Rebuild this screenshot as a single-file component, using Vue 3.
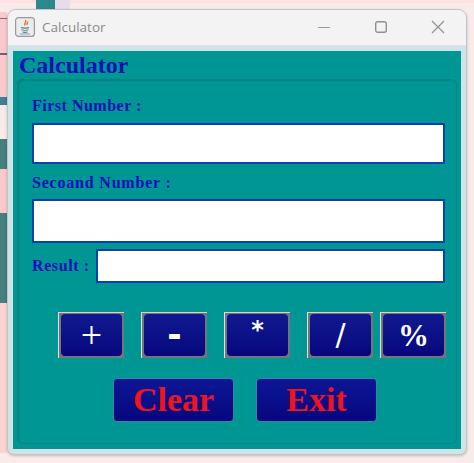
<script setup>
const ops = [
  { text: '+', cls: 'plus' },
  { text: '-', cls: 'minus' },
  { text: '*', cls: 'star' },
  { text: '/', cls: 'slash' },
  { text: '%', cls: 'percent' },
]
</script>

<template>
  <div class="desk">
    <!-- what shows of the page behind the window -->
    <div class="behind">
      <span class="bit top"></span>
      <span class="bit a"></span>
      <span class="bit a2"></span>
      <span class="bit b"></span>
      <span class="bit line1"></span>
      <span class="bit line2"></span>
      <span class="bit c"></span>
      <span class="bit d"></span>
      <span class="bit b2"></span>
      <span class="bit e"></span>
      <span class="bit b3"></span>
    </div>

    <div class="window">
      <div class="titlebar">
        <svg class="app-icon" width="20" height="20" viewBox="0 0 20 20">
          <rect x="0.6" y="0.6" width="18.8" height="18.8" rx="3" fill="#ececec" stroke="#9a9a9a" stroke-width="1.200" />
          <path d="M10.500 3c1.500 2-2 3-.5 5.500M12.500 4.500c.8 1.300-1.200 2-.4 3.500" fill="none" stroke="#d9762c" stroke-width="1.400" />
          <path d="M6 10.500c1 .8 7 .8 8 0M6.500 12.800c1.500.6 5.500.6 7 0M7.500 15c1.500.4 3.500.4 5 0" stroke="#4f7f9c" stroke-width="1.200" fill="none" />
          <path d="M5 17h10" stroke="#7a9bb0" stroke-width="0.900" />
        </svg>
        <span class="title">Calculator</span>
        <div class="controls">
          <svg width="14" height="14" viewBox="0 0 14 14"><path d="M1 7.500h12" stroke="#9a9a9a" stroke-width="1.200" /></svg>
          <svg width="14" height="14" viewBox="0 0 14 14"><rect x="1.700" y="1.700" width="10.600" height="10.600" rx="2" fill="none" stroke="#909090" stroke-width="1.400" /></svg>
          <svg width="14" height="14" viewBox="0 0 14 14"><path d="M1 1l12 12M13 1L1 13" stroke="#909090" stroke-width="1.200" /></svg>
        </div>
      </div>

      <div class="content">
        <h1>Calculator</h1>
        <div class="panel">
          <label class="lbl first">First Number :</label>
          <input class="box tall" type="text" />
          <label class="lbl second">Secoand Number :</label>
          <input class="box taller" type="text" />
          <div class="result-row">
            <label class="lbl">Result :</label>
            <input class="box res" type="text" />
          </div>
          <div class="ops">
            <button v-for="op in ops" :key="op.text" class="op">
              <span class="face" :class="op.cls">{{ op.text }}</span>
            </button>
          </div>
          <div class="actions">
            <button class="action">Clear</button>
            <button class="action">Exit</button>
          </div>
        </div>
      </div>
    </div>
  </div>
</template>

<style scoped>
.desk {
  position: relative;
  width: 474px;
  height: 463px;
  overflow: hidden;
  background: #f8ebe9;
  padding: 9px 0 0 7px;
  box-sizing: border-box;
}

.behind .bit {
  position: absolute;
  display: block;
}

.bit.top {
  left: 0;
  top: 0;
  width: 474px;
  height: 3px;
  background: #fde0e0;
}

.bit.a {
  left: 36px;
  top: 0;
  width: 19px;
  height: 9px;
  background: #2a8a8c;
}

.bit.a2 {
  left: 55px;
  top: 0;
  width: 15px;
  height: 9px;
  background: #e6dcec;
}

.bit.b {
  left: 0;
  top: 12px;
  width: 7px;
  height: 85px;
  background: #fbc9cb;
}

.bit.line1 {
  left: 0;
  top: 18px;
  width: 7px;
  height: 1px;
  background: #8a6a80;
}

.bit.line2 {
  left: 0;
  top: 53px;
  width: 7px;
  height: 2px;
  background: #7a5a78;
}

.bit.c {
  left: 0;
  top: 97px;
  width: 7px;
  height: 8px;
  background: #3f7f8f;
}

.bit.d {
  left: 0;
  top: 139px;
  width: 7px;
  height: 30px;
  background: #45807e;
}

.bit.b2 {
  left: 0;
  top: 169px;
  width: 7px;
  height: 44px;
  background: #fbc9cb;
}

.bit.e {
  left: 0;
  top: 213px;
  width: 7px;
  height: 90px;
  background: #45807e;
}

.bit.b3 {
  left: 0;
  top: 303px;
  width: 7px;
  height: 150px;
  background: #fbd3d3;
}

.window {
  position: relative;
  width: 460px;
  height: 446px;
  box-sizing: border-box;
  background: #cfe4e8;
  border: 1px solid #c4c4c4;
  border-radius: 9px 9px 7px 7px;
  box-shadow: 0 1px 3px rgba(0, 0, 0, 0.2);
  overflow: hidden;
}

.titlebar {
  display: flex;
  align-items: center;
  height: 36px;
  padding: 0 21px 2px 7px;
  box-sizing: border-box;
  background: #f3f3f3;
  border-bottom: 1px solid #e2e2e2;
}

.app-icon {
  margin-right: 7px;
}

.title {
  font-family: 'Open Sans', sans-serif;
  font-size: 13.500px;
  color: #8a8a8a;
}

.controls {
  margin-left: auto;
  display: flex;
  align-items: center;
  gap: 43px;
}

.content {
  margin: 5px 5px 0 5px;
  height: 398px;
  background: #009694;
  padding: 0 4px 5px 4px;
  box-sizing: border-box;
  display: flex;
  flex-direction: column;
}

h1 {
  margin: 0;
  padding-left: 2px;
  height: 28px;
  line-height: 28px;
  font-family: 'Liberation Serif', serif;
  font-size: 24px;
  font-weight: 700;
  color: #0a10b8;
}

.panel {
  flex: 1;
  box-sizing: border-box;
  padding: 0 12px 0 14px;
  border: 1px solid #0a8280;
  border-radius: 5px;
  box-shadow: inset 1px 1px 2px rgba(0, 70, 70, 0.25);
  display: flex;
  flex-direction: column;
  align-items: flex-start;
}

.lbl {
  font-family: 'Liberation Serif', serif;
  font-size: 16px;
  font-weight: 700;
  letter-spacing: 0.6px;
  color: #0a10b8;
  line-height: 18px;
}

.first {
  margin-top: 17px;
  margin-bottom: 8px;
  letter-spacing: 0.5px;
}

.second {
  margin-top: 10px;
  margin-bottom: 7px;
  letter-spacing: 0.8px;
}

.box {
  display: block;
  box-sizing: border-box;
  background: #fff;
  border: 2px solid #0a3fae;
  outline: none;
  padding: 0;
  width: 413px;
}

.tall {
  height: 41px;
}

.taller {
  height: 44px;
}

.result-row {
  display: flex;
  align-items: center;
  gap: 6px;
  margin-top: 6px;
  width: 413px;
}

.res {
  flex: 1;
  width: auto;
  min-width: 0;
  height: 34px;
}

.ops {
  display: flex;
  margin-top: 29px;
  margin-left: 26px;
  gap: 17px;
}

/* grey frame with a thin light edge top and left, the blue face sits inside it */
.op {
  width: 66px;
  height: 46px;
  box-sizing: border-box;
  padding: 1px 2px 2px 2px;
  background: #74757c;
  border: none;
  border-top: 1px solid #d8d2cc;
  border-left: 1px solid #e4e0da;
  color: #fff;
}

.op:last-child {
  margin-left: -10px;
}

.face {
  display: flex;
  align-items: center;
  justify-content: center;
  height: 100%;
  box-sizing: border-box;
  border-radius: 4px;
  background: linear-gradient(#101a8e, #07077e);
  font-family: 'Liberation Serif', serif;
  font-size: 34px;
  line-height: 1;
}

.plus {
  font-size: 38px;
}

.minus {
  font-family: 'Liberation Sans', sans-serif;
  font-size: 42px;
  font-weight: 700;
  padding-bottom: 2px;
}

.star {
  font-family: 'DejaVu Sans', sans-serif;
  font-weight: 700;
  font-size: 24px;
  padding-bottom: 10px;
}

.slash {
  font-family: 'DejaVu Sans', sans-serif;
  font-size: 30px;
}

.percent {
  font-weight: 700;
  font-size: 31px;
}

.actions {
  display: flex;
  gap: 22px;
  margin-top: 20px;
  margin-left: 81px;
}

.action {
  width: 121px;
  height: 44px;
  box-sizing: border-box;
  padding: 0;
  background: linear-gradient(#0d1696, #07077e);
  border: 1px solid #3f7fa8;
  border-radius: 4px;
  font-family: 'Liberation Serif', serif;
  font-size: 34px;
  font-weight: 700;
  line-height: 1;
  color: #f0141e;
}
</style>
